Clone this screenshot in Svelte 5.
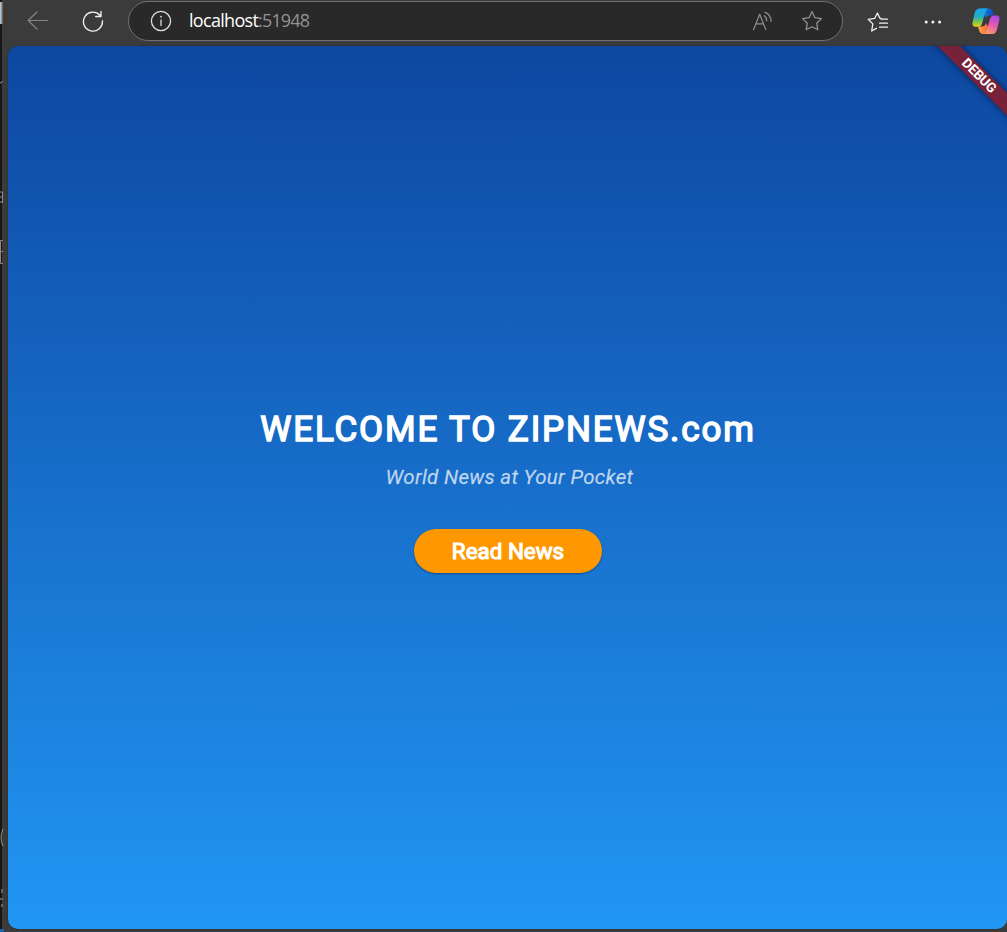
<script>
  const url = { host: 'localhost', port: ':51948' };
</script>

<div class="window">
  <aside class="behind" aria-hidden="true">
    <svg width="4" height="932" viewBox="0 0 4 932" fill="none">
      <path d="M0 0H2V932H0Z" fill="#171717" />
      <path d="M0 2H1.8V24H0Z" fill="#9fc9e8" />
      <path d="M2.3 2V24" stroke="#a86f38" />
      <path d="M0 83H1L2.5 81" stroke="#8b9299" />
      <path d="M0 192H2.5V202H0M0 197H2M2.5 202V203" stroke="#8a8d94" />
      <path d="M3 240.5H.5V263.5H3M0 251.5H3" stroke="#8c8980" />
      <path d="M3 829Q-1 838 3 846" stroke="#969087" />
      <path d="M0 899H3M2 889V893M2 904V907" stroke="#777" stroke-width="1.5" />
      <path d="M0 929H4V932H0Z" fill="#1267b5" />
    </svg>
  </aside>

  <div class="main">
    <header class="toolbar">
      <button class="back" aria-label="Back">
        <svg width="22" height="20" viewBox="0 0 22 20" fill="none" stroke="#858585" stroke-width="1.2" stroke-linecap="round" stroke-linejoin="round"><path d="M20.5 10.5H1.2M10 2L1.2 10.5L10 19" /></svg>
      </button>
      <button class="reload" aria-label="Reload">
        <svg width="22" height="22" viewBox="0 0 22 22" fill="none" stroke="#f0f0f0" stroke-width="1.35" stroke-linecap="round" stroke-linejoin="round"><path d="M20.4 10.8A9.5 9.5 0 1 1 17.9 5.2M19 1.3V6.5H13.7" /></svg>
      </button>
      <div class="address">
        <svg class="info" width="22" height="22" viewBox="0 0 22 22" fill="none" stroke="#dedede" stroke-width="1.3"><circle cx="11" cy="11" r="9.6" /><path d="M11 9.5V16" /><circle cx="11" cy="6.7" r=".9" fill="#dedede" stroke="none" /></svg>
        <span class="url">{url.host}<span>{url.port}</span></span>
        <svg class="aloud" width="21" height="21" viewBox="0 0 21 21" fill="none" stroke="#929292" stroke-width="1.2" stroke-linecap="round" stroke-linejoin="round"><path d="M1.6 18.6L7.7 3.2L13.8 18.6M3.9 12.9H11.5M12.3 4.8Q14.7 6.7 14.7 9.8M13.1 1.4Q19.1 3.8 19 10.5" /></svg>
        <svg class="star" width="22" height="22" viewBox="0 0 22 22" fill="none" stroke="#929292" stroke-width="1.25" stroke-linejoin="round"><path d="M11 1.6L13.9 7.7L20.4 8.6L15.7 13.2L16.8 19.8L11 16.7L5.2 19.8L6.3 13.2L1.6 8.6L8.1 7.7Z" /></svg>
      </div>
      <button class="favorites" aria-label="Favorites">
        <svg width="22" height="22" viewBox="0 0 22 22" fill="none" stroke="#f2f2f2" stroke-width="1.3" stroke-linecap="round" stroke-linejoin="round"><path d="M14.1 7.4L12.9 7.2L10.4 2L7.8 7.3L1.2 8.3L5.8 12.9L4.7 20L9.4 17.4M14.2 8.2H20.4M12.6 12.2H20.4M12.6 16.2H20.4" /></svg>
      </button>
      <button class="more" aria-label="More">
        <svg width="18" height="4" viewBox="0 0 18 4" fill="#f2f2f2"><circle cx="2.2" cy="2" r="1.5" /><circle cx="8.9" cy="2" r="1.5" /><circle cx="15.6" cy="2" r="1.5" /></svg>
      </button>
      <button class="copilot" aria-label="Copilot">
        <svg width="28" height="27" viewBox="0 0 28 27">
          <defs>
            <linearGradient id="left" x1="0" y1="0" x2="0" y2="1"><stop offset="0" stop-color="#18a8ee" /><stop offset=".45" stop-color="#20adc4" /><stop offset=".72" stop-color="#79c54d" /><stop offset="1" stop-color="#f4cf1c" /></linearGradient>
            <linearGradient id="right" x1=".7" y1="0" x2=".3" y2="1"><stop offset="0" stop-color="#a849e8" /><stop offset=".5" stop-color="#e65aac" /><stop offset="1" stop-color="#ff9d68" /></linearGradient>
            <linearGradient id="top"><stop offset="0" stop-color="#178bea" /><stop offset="1" stop-color="#1546bb" /></linearGradient>
            <linearGradient id="bottom"><stop offset="0" stop-color="#ffb333" /><stop offset="1" stop-color="#ed4355" /></linearGradient>
          </defs>
          <path d="M8 .5H17Q20 .5 21 4L22 7.5H17Q14.8 7.5 14 10Z" fill="url(#top)" />
          <path d="M20 26H11Q8 26 7 22L6 18.5H10Q13 18.5 14 15Z" fill="url(#bottom)" />
          <path d="M7.5 .5H16Q14 1.3 13 5L10 15.5Q9 18.8 6 18.8H3.5Q-.2 18.8 .6 14L2.7 5Q3.8 .5 7.5 .5Z" fill="url(#left)" />
          <path d="M20.5 26H12Q14 25 15 21.5L18 11Q19 7.5 22 7.5H24.5Q28.3 7.5 27.3 12.5L25 21.5Q23.8 26 20.5 26Z" fill="url(#right)" />
        </svg>
      </button>
    </header>

    <main class="page">
      <h1>WELCOME TO ZIPNEWS.com</h1>
      <p>World News at Your Pocket</p>
      <button class="read">Read News</button>
      <div class="banner">DEBUG</div>
    </main>
  </div>
</div>

<style>
  :global(body) { margin: 0; overflow: hidden; background: #3b3b3b; }
  .window { display: flex; width: 1007px; height: 932px; background: #3b3b3b; overflow: hidden; }
  .behind { width: 8px; flex: none; }
  svg { display: block; flex: none; }
  button { border: 0; background: none; padding: 0; margin: 0; flex: none; }
  .main { width: 999px; display: flex; flex-direction: column; }
  .toolbar { height: 46px; display: flex; align-items: flex-start; flex: none; }
  .back { margin: 10px 0 0 19px; }
  .reload { margin: 10px 0 0 33px; }
  .address { box-sizing: border-box; width: 715px; height: 40px; margin: 1px 0 0 24px; border: 1px solid #707070; border-radius: 20px; background: #292929; display: flex; align-items: center; padding-left: 21px; }
  .url { margin: -2px 0 0 17px; width: 563px; color: #fff; font: 18px/24px "Open Sans", sans-serif; letter-spacing: -.7px; }
  .url span { color: #929292; letter-spacing: -.85px; }
  .aloud { margin-right: 28px; }
  .favorites { margin: 11px 0 0 24px; }
  .more { margin: 20px 0 0 35px; }
  .copilot { margin: 8px 0 0 30px; }
  .page { position: relative; box-sizing: border-box; height: 883px; padding-top: 363px; border-radius: 10px; overflow: hidden; background: linear-gradient(#0d47a1, #2196f3); display: flex; flex-direction: column; align-items: center; color: #fff; font-family: Roboto, sans-serif; box-shadow: 0 0 2px #262626; }
  h1 { margin: 0 0 0 1px; font-size: 35px; line-height: 42px; font-weight: 400; letter-spacing: 1.86px; -webkit-text-stroke: 1.5px #fff; white-space: nowrap; }
  p { margin: 13px 0 0 4px; font-size: 20.5px; line-height: 26px; font-style: italic; letter-spacing: .3px; color: rgba(255,255,255,.7); -webkit-text-stroke: .3px rgba(255,255,255,.4); white-space: nowrap; }
  .read { width: 188px; height: 44px; margin-top: 39px; padding-left: 1px; border-radius: 22px; background: #ff9800; color: #fff; font: 400 22.4px/44px Roboto, sans-serif; -webkit-text-stroke: 1.1px #fff; box-shadow: 0 1px 2px rgba(0,0,0,.35); }
  .banner { position: absolute; left: 910.5px; top: 22px; width: 120px; height: 15.5px; transform: rotate(45deg); background: #772239; box-shadow: 0 0 6px rgba(0,0,0,.55); font-size: 13.5px; line-height: 15.5px; font-weight: 700; letter-spacing: -.2px; text-align: center; }
</style>
